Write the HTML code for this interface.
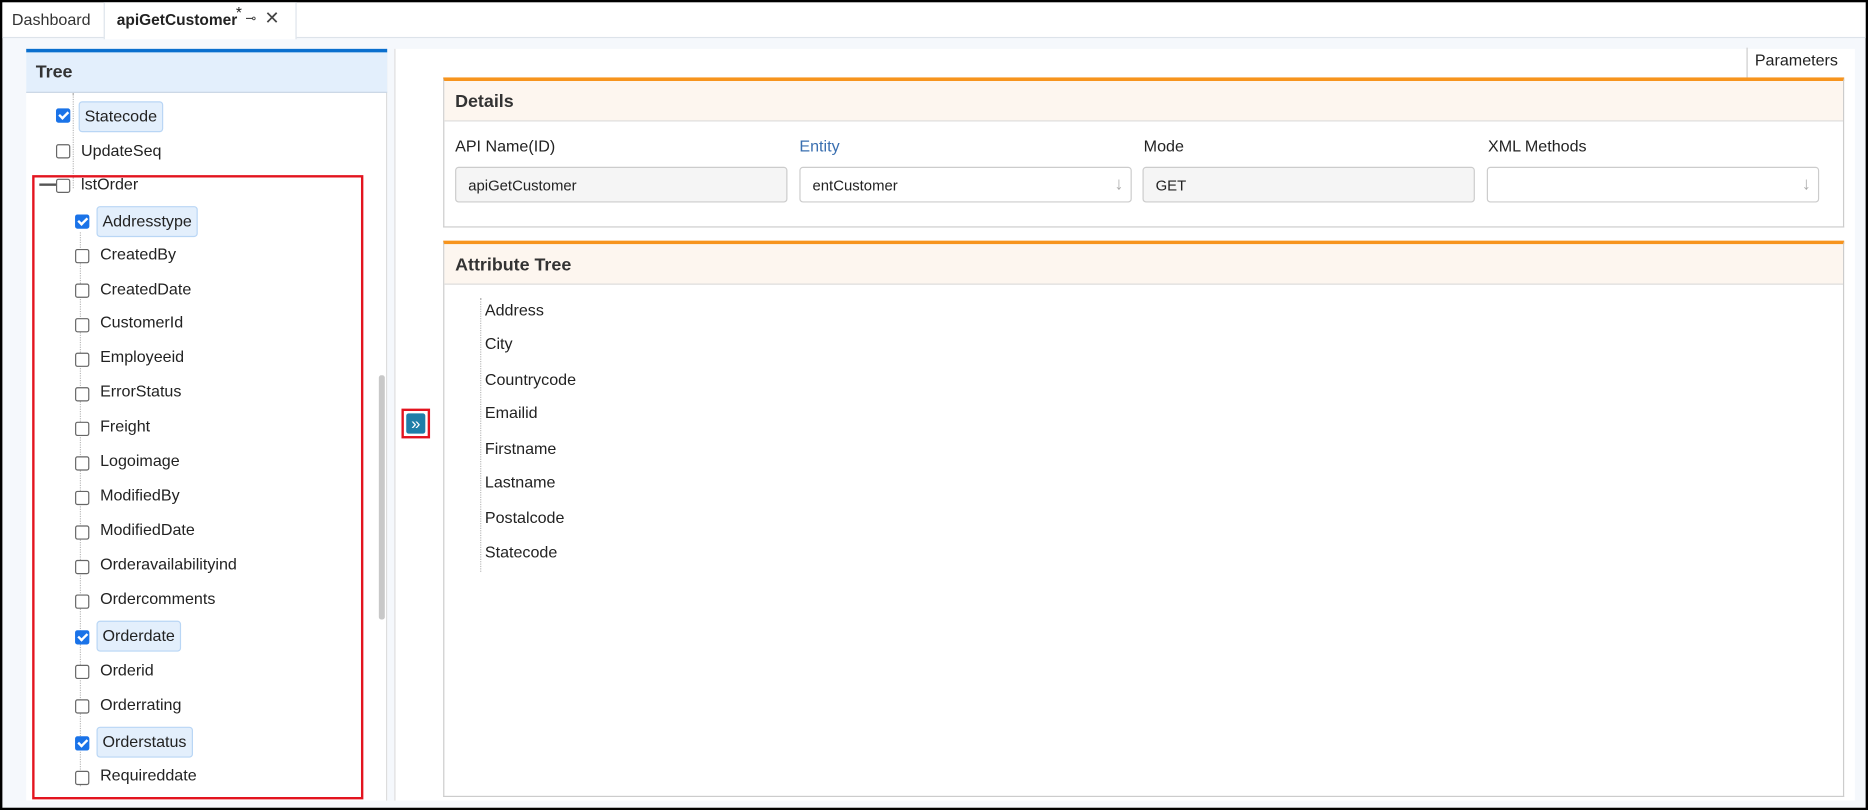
<!DOCTYPE html>
<html><head><meta charset="utf-8"><style>
*{box-sizing:border-box;margin:0;padding:0}
html,body{width:1868px;height:810px;overflow:hidden;background:#000}
#w{position:absolute;left:0;top:0;width:1568px;height:680px;transform:scale(1.19133);transform-origin:0 0;font-family:"Liberation Sans",sans-serif;color:#222;font-size:13.5px}
.a{position:absolute}
.cb{position:absolute;width:12px;height:12px;border:1px solid #666;border-radius:2px;background:#fff}
.cb.on{background:#1a73e8;border-color:#1a73e8}
.cb.on:after{content:"";position:absolute;left:3px;top:0px;width:3px;height:6px;border:solid #fff;border-width:0 2px 2px 0;transform:rotate(45deg)}
.lbl{position:absolute;font-size:13.5px;line-height:18px}
.hl{background:#e3effc;border:1px solid #b9d6f5;border-radius:3px;padding:3px 4px}
.inp{position:absolute;height:30px;border:1px solid #ccc;border-radius:3px;font-size:12.5px;padding:8px 10px;background:#fff}
</style></head><body><div id="w">
<div class="a" style="left:2px;top:2px;width:1564px;height:676px;background:#f5f8fc"></div>
<div class="a" style="left:2px;top:2px;width:1564px;height:30px;background:#fff;border-bottom:1px solid #dde3ea"></div>
<div class="a" style="left:10px;top:9px;font-size:13.5px;color:#333">Dashboard</div>
<div class="a" style="left:87px;top:2px;width:162px;height:31px;background:#fff;border-left:1px solid #dde3ea;border-right:1px solid #dde3ea"></div>
<div class="a" style="left:98px;top:9px;font-size:13px;font-weight:bold;color:#222">apiGetCustomer</div>
<div class="a" style="left:198px;top:3px;font-size:13px">*</div>
<div class="a" style="left:206px;top:9px;font-size:11px;color:#444">⊸</div>
<div class="a" style="left:222px;top:6px;font-size:15px;color:#444">✕</div>

<div class="a" style="left:22px;top:41px;width:303px;height:631px;background:#fff;border-right:1px solid #ddd"></div>
<div class="a" style="left:22px;top:41px;width:303px;height:3px;background:#0a6fce"></div>
<div class="a" style="left:22px;top:44px;width:303px;height:34px;background:#e3effc;border-bottom:1px solid #c9d6e4"></div>
<div class="a" style="left:30px;top:52px;font-size:15px;font-weight:bold;color:#333">Tree</div>
<div class="a" style="left:318px;top:315px;width:5px;height:205px;background:#c8c8c8;border-radius:2px"></div>
<div class="a" style="left:61px;top:78px;height:80px;border-left:1px dotted #bbb"></div>
<div class="a" style="left:67px;top:195px;height:465px;border-left:1px dotted #bbb"></div>
<div class="a" style="left:33px;top:154px;width:14px;height:2px;background:#555"></div>

<div class="cb on" style="left:47px;top:91px"></div><div class="lbl hl" style="left:66px;top:85px">Statecode</div>
<div class="cb" style="left:47px;top:121px"></div><div class="lbl" style="left:68px;top:118px">UpdateSeq</div>
<div class="cb" style="left:47px;top:150px"></div><div class="lbl" style="left:68px;top:146px">lstOrder</div>
<div class="cb on" style="left:63px;top:180px"></div><div class="lbl hl" style="left:81px;top:173px">Addresstype</div>
<div class="cb" style="left:63px;top:209px"></div><div class="lbl" style="left:84px;top:205px">CreatedBy</div>
<div class="cb" style="left:63px;top:238px"></div><div class="lbl" style="left:84px;top:234px">CreatedDate</div>
<div class="cb" style="left:63px;top:267px"></div><div class="lbl" style="left:84px;top:262px">CustomerId</div>
<div class="cb" style="left:63px;top:296px"></div><div class="lbl" style="left:84px;top:291px">Employeeid</div>
<div class="cb" style="left:63px;top:325px"></div><div class="lbl" style="left:84px;top:320px">ErrorStatus</div>
<div class="cb" style="left:63px;top:354px"></div><div class="lbl" style="left:84px;top:349px">Freight</div>
<div class="cb" style="left:63px;top:383px"></div><div class="lbl" style="left:84px;top:378px">Logoimage</div>
<div class="cb" style="left:63px;top:412px"></div><div class="lbl" style="left:84px;top:407px">ModifiedBy</div>
<div class="cb" style="left:63px;top:441px"></div><div class="lbl" style="left:84px;top:436px">ModifiedDate</div>
<div class="cb" style="left:63px;top:470px"></div><div class="lbl" style="left:84px;top:465px">Orderavailabilityind</div>
<div class="cb" style="left:63px;top:499px"></div><div class="lbl" style="left:84px;top:494px">Ordercomments</div>
<div class="cb on" style="left:63px;top:529px"></div><div class="lbl hl" style="left:81px;top:521px">Orderdate</div>
<div class="cb" style="left:63px;top:558px"></div><div class="lbl" style="left:84px;top:554px">Orderid</div>
<div class="cb" style="left:63px;top:587px"></div><div class="lbl" style="left:84px;top:583px">Orderrating</div>
<div class="cb on" style="left:63px;top:618px"></div><div class="lbl hl" style="left:81px;top:610px">Orderstatus</div>
<div class="cb" style="left:63px;top:647px"></div><div class="lbl" style="left:84px;top:642px">Requireddate</div>
<div class="a" style="left:27px;top:147px;width:278px;height:524px;border:2px solid #e3141f"></div>

<div class="a" style="left:331px;top:41px;width:1226px;height:631px;background:#fff;border-left:1px solid #ddd"></div>
<div class="a" style="left:1466px;top:40px;width:82px;height:25px;border-left:1px solid #ccc;padding:3px 6px;font-size:13.5px">Parameters</div>
<div class="a" style="left:337px;top:343px;width:24px;height:25px;border:2px solid #e3141f;padding:2px"><div style="width:16px;height:17px;background:#1f7ea8;border-radius:2px;color:#fff;font-size:14px;line-height:16px;text-align:center">»</div></div>

<div class="a" style="left:372px;top:65px;width:1176px;height:126px;border:1px solid #ccc;border-top:3px solid #f7941d"></div>
<div class="a" style="left:373px;top:68px;width:1174px;height:34px;background:#fdf6ef;border-bottom:1px solid #ddd"></div>
<div class="a" style="left:382px;top:77px;font-size:15px;font-weight:bold;color:#333">Details</div>
<div class="a" style="left:382px;top:115px">API Name(ID)</div>
<div class="a" style="left:671px;top:115px;color:#3a6fb0">Entity</div>
<div class="a" style="left:960px;top:115px">Mode</div>
<div class="a" style="left:1249px;top:115px">XML Methods</div>
<div class="inp" style="left:382px;top:140px;width:279px;background:#f5f5f5">apiGetCustomer</div>
<div class="inp" style="left:671px;top:140px;width:279px">entCustomer<span style="position:absolute;right:6px;top:5px;color:#aaa;font-size:15px">↓</span></div>
<div class="inp" style="left:959px;top:140px;width:279px;background:#f5f5f5">GET</div>
<div class="inp" style="left:1248px;top:140px;width:279px"><span style="position:absolute;right:6px;top:5px;color:#aaa;font-size:15px">↓</span></div>

<div class="a" style="left:372px;top:202px;width:1176px;height:467px;border:1px solid #ccc;border-top:3px solid #f7941d"></div>
<div class="a" style="left:373px;top:205px;width:1174px;height:34px;background:#fdf6ef;border-bottom:1px solid #ddd"></div>
<div class="a" style="left:382px;top:214px;font-size:15px;font-weight:bold;color:#333">Attribute Tree</div>
<div class="a" style="left:403px;top:250px;height:230px;border-left:1px dotted #bbb"></div>
<div class="lbl" style="left:407px;top:252px">Address</div>
<div class="lbl" style="left:407px;top:280px">City</div>
<div class="lbl" style="left:407px;top:310px">Countrycode</div>
<div class="lbl" style="left:407px;top:338px">Emailid</div>
<div class="lbl" style="left:407px;top:368px">Firstname</div>
<div class="lbl" style="left:407px;top:396px">Lastname</div>
<div class="lbl" style="left:407px;top:426px">Postalcode</div>
<div class="lbl" style="left:407px;top:455px">Statecode</div>
</div></body></html>
